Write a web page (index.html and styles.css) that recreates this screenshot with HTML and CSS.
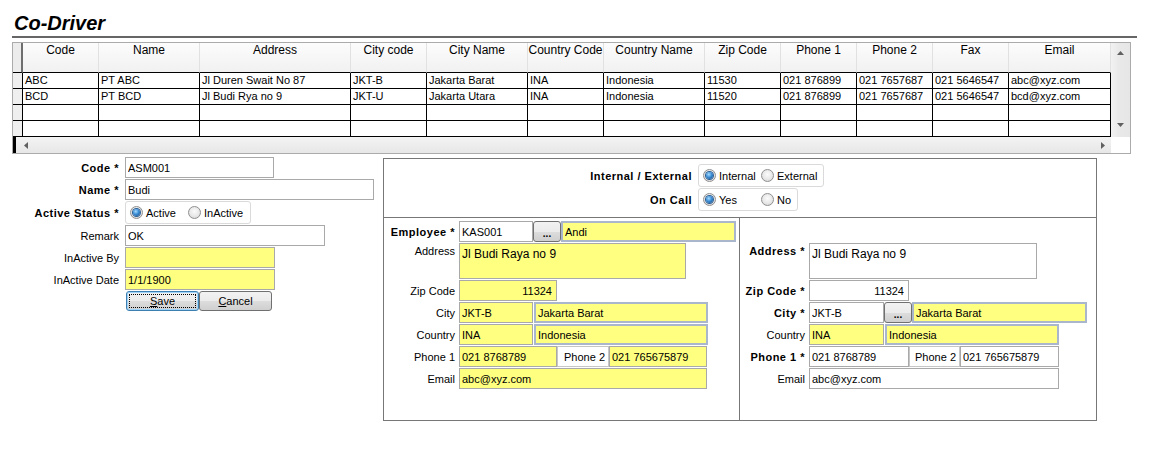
FILE: index.html
```html
<!DOCTYPE html>
<html>
<head>
<meta charset="utf-8">
<title>Co-Driver</title>
<link rel="stylesheet" href="styles.css">
</head>
<body>
<h1 class="title">Co-Driver</h1>

<div class="grid">
  <div class="rh rh-head"></div>
  <div class="hc">Code</div>
  <div class="hc">Name</div>
  <div class="hc">Address</div>
  <div class="hc">City code</div>
  <div class="hc">City Name</div>
  <div class="hc">Country Code</div>
  <div class="hc">Country Name</div>
  <div class="hc">Zip Code</div>
  <div class="hc">Phone 1</div>
  <div class="hc">Phone 2</div>
  <div class="hc">Fax</div>
  <div class="hc">Email</div>
  <div class="vscroll">
    <svg width="7" height="4" viewBox="0 0 7 4"><path d="M0 4 L3.5 0 L7 4 Z" fill="#606060"/></svg>
    <svg width="7" height="4" viewBox="0 0 7 4"><path d="M0 0 L3.5 4 L7 0 Z" fill="#606060"/></svg>
  </div>

  <div class="rh"></div>
  <div class="dc">ABC</div><div class="dc">PT ABC</div><div class="dc">Jl Duren Swait No 87</div><div class="dc">JKT-B</div><div class="dc">Jakarta Barat</div><div class="dc">INA</div><div class="dc">Indonesia</div><div class="dc">11530</div><div class="dc">021 876899</div><div class="dc">021 7657687</div><div class="dc">021 5646547</div><div class="dc">abc@xyz.com</div>

  <div class="rh"></div>
  <div class="dc">BCD</div><div class="dc">PT BCD</div><div class="dc">Jl Budi Rya no 9</div><div class="dc">JKT-U</div><div class="dc">Jakarta Utara</div><div class="dc">INA</div><div class="dc">Indonesia</div><div class="dc">11520</div><div class="dc">021 876899</div><div class="dc">021 7657687</div><div class="dc">021 5646547</div><div class="dc">bcd@xyz.com</div>

  <div class="rh"></div>
  <div class="dc"></div><div class="dc"></div><div class="dc"></div><div class="dc"></div><div class="dc"></div><div class="dc"></div><div class="dc"></div><div class="dc"></div><div class="dc"></div><div class="dc"></div><div class="dc"></div><div class="dc"></div>

  <div class="rh"></div>
  <div class="dc"></div><div class="dc"></div><div class="dc"></div><div class="dc"></div><div class="dc"></div><div class="dc"></div><div class="dc"></div><div class="dc"></div><div class="dc"></div><div class="dc"></div><div class="dc"></div><div class="dc"></div>

  <div class="hscroll">
    <div class="hs-left">
      <span class="hs-bar"></span>
      <svg width="4" height="7" viewBox="0 0 4 7"><path d="M4 0 L0 3.5 L4 7 Z" fill="#606060"/></svg>
    </div>
    <svg width="4" height="7" viewBox="0 0 4 7"><path d="M0 0 L4 3.5 L0 7 Z" fill="#606060"/></svg>
  </div>
  <div class="corner"></div>
</div>

<div class="lower">
  <div class="form">
    <label class="lbl b">Code *</label>
    <input class="tb w-code" value="ASM001">
    <label class="lbl b">Name *</label>
    <input class="tb w-name" value="Budi">
    <label class="lbl b">Active Status *</label>
    <div class="rgroup g-active">
      <span class="opt"><span class="radio on"></span>Active</span>
      <span class="opt"><span class="radio"></span>InActive</span>
    </div>
    <label class="lbl">Remark</label>
    <input class="tb w-remark" value="OK">
    <label class="lbl">InActive By</label>
    <input class="tb y w-inact" value="">
    <label class="lbl">InActive Date</label>
    <input class="tb y w-inact" value="1/1/1900">
    <span></span>
    <div class="btns">
      <button class="btn focus"><u>S</u>ave</button>
      <button class="btn"><u>C</u>ancel</button>
    </div>
  </div>

  <div class="panel">
    <div class="ptop">
      <div class="lbl b">Internal / External</div>
      <div class="rgroup">
        <span class="opt"><span class="radio on"></span>Internal</span>
        <span class="opt"><span class="radio"></span>External</span>
      </div>
      <div class="lbl b">On Call</div>
      <div class="rgroup">
        <span class="opt"><span class="radio on"></span>Yes</span>
        <span class="opt"><span class="radio"></span>No</span>
      </div>
    </div>

    <div class="pbottom">
      <div class="sec sec-l">
        <label class="lbl b">Employee *</label>
        <div class="row">
          <input class="tb w-l-code" value="KAS001">
          <button class="dots">...</button>
          <input class="tb y thick w-l-name" value="Andi">
        </div>
        <label class="lbl top">Address</label>
        <textarea class="tb y ta w-l-addr">Jl Budi Raya no 9</textarea>
        <label class="lbl">Zip Code</label>
        <input class="tb y num w-l-zip" value="11324">
        <label class="lbl">City</label>
        <div class="row">
          <input class="tb y w-l-code" value="JKT-B">
          <input class="tb y thick w-l-city" value="Jakarta Barat">
        </div>
        <label class="lbl">Country</label>
        <div class="row">
          <input class="tb y w-l-code" value="INA">
          <input class="tb y thick w-l-city" value="Indonesia">
        </div>
        <label class="lbl">Phone 1</label>
        <div class="row">
          <input class="tb y w-l-zip" value="021 8768789">
          <span class="plbl w-l-plbl">Phone 2</span>
          <input class="tb y w-l-zip" value="021 765675879">
        </div>
        <label class="lbl">Email</label>
        <input class="tb y w-l-email" value="abc@xyz.com">
      </div>

      <div class="sec sec-r">
        <label class="lbl b top">Address *</label>
        <textarea class="tb ta w-r-addr">Jl Budi Raya no 9</textarea>
        <label class="lbl b">Zip Code *</label>
        <input class="tb num w-r-zip" value="11324">
        <label class="lbl b">City *</label>
        <div class="row">
          <input class="tb w-r-code" value="JKT-B">
          <button class="dots">...</button>
          <input class="tb y thick w-r-name" value="Jakarta Barat">
        </div>
        <label class="lbl">Country</label>
        <div class="row">
          <input class="tb y w-r-code" value="INA">
          <input class="tb y thick w-r-country" value="Indonesia">
        </div>
        <label class="lbl b">Phone 1 *</label>
        <div class="row">
          <input class="tb w-r-zip" value="021 8768789">
          <span class="plbl w-r-plbl">Phone 2</span>
          <input class="tb w-r-ph2" value="021 765675879">
        </div>
        <label class="lbl">Email</label>
        <input class="tb w-r-email" value="abc@xyz.com">
      </div>
    </div>
  </div>
</div>
</body>
</html>
```

FILE: styles.css
```css
* { box-sizing: border-box; }

body {
  margin: 0;
  background: #fff;
  color: #000;
  font-family: "Liberation Sans", Arial, sans-serif;
  font-size: 11px;
}

input, textarea, button {
  font: inherit;
  color: #000;
  margin: 0;
}

.title {
  margin: 0 0 0 12px;
  width: 1125px;
  padding: 11px 0 1px 2px;
  font: italic bold 20px/24px "Liberation Sans", Arial, sans-serif;
  border-bottom: 2px solid #666;
}

/* ---------- data grid ---------- */
.grid {
  margin: 4px 0 0 12px;
  width: 1119px;
  border: 1px solid #ababab;
  display: grid;
  grid-template-columns: 10px 76px 101px 151px 76px 101px 76px 101px 76px 76px 76px 76px 102px 19px;
  grid-template-rows: 30px 16px 16px 16px 16px 16px;
}

.hc {
  background: linear-gradient(#fcfcfc, #f1f1f1);
  border-right: 1px solid #e1e1e1;
  border-bottom: 1px solid #000;
  font-size: 12px;
  line-height: 15px;
  text-align: center;
  white-space: nowrap;
}

.rh {
  background: #efefef;
  border-right: 1px solid #000;
  border-bottom: 1px solid #000;
}

.rh-head {
  background: #ececec;
  border-right: 2px solid #6e6e6e;
}

.dc {
  border-right: 1px solid #000;
  border-bottom: 1px solid #000;
  padding-left: 2px;
  line-height: 15px;
  white-space: nowrap;
  overflow: hidden;
}

.vscroll {
  grid-column: 14;
  grid-row: 1 / 6;
  background: linear-gradient(90deg, #f2f2f2, #e9e9e9 40%, #e6e6e6);
  display: flex;
  flex-direction: column;
  justify-content: space-between;
  align-items: center;
  padding: 8px 0 10px;
}

.hscroll {
  grid-column: 1 / 14;
  grid-row: 6;
  background: linear-gradient(#f3f3f3, #e7e7e7);
  display: flex;
  justify-content: space-between;
  align-items: center;
  padding-right: 6px;
}

.hs-left {
  display: flex;
  align-items: center;
  height: 100%;
  gap: 8px;
}

.hs-bar {
  width: 3px;
  height: 100%;
  background: #000;
}

.corner {
  grid-column: 14;
  grid-row: 6;
  background: #fff;
}

/* ---------- lower area ---------- */
.lower {
  display: flex;
  margin-top: 3px;
}

.form {
  width: 383px;
  display: grid;
  grid-template-columns: 125px auto;
  grid-template-rows: 21px 21px 23px 21px 21px 21px 20px;
  row-gap: 1px;
  align-content: start;
}

.lbl {
  display: flex;
  align-items: center;
  justify-content: flex-end;
  padding-right: 6px;
  white-space: nowrap;
}

.lbl.b {
  font-weight: bold;
  letter-spacing: 0.5px;
}

.lbl.top {
  align-items: flex-start;
  padding-top: 2px;
}

.tb {
  height: 21px;
  border: 1px solid #a9a9a9;
  background: #fff;
  padding: 0 2px;
  outline: none;
  justify-self: start;
}

.tb.y { background: #ffff80; }

.tb.thick {
  border: 2px solid #a9b6cc;
}

.tb.num { text-align: right; padding-right: 4px; }

.ta {
  height: 36px;
  font-size: 12px;
  padding: 3px 2px 0;
  resize: none;
  overflow: hidden;
  line-height: 15px;
}

.w-code { width: 149px; }
.w-name { width: 249px; }
.w-remark { width: 200px; }
.w-inact { width: 150px; }

.rgroup {
  display: flex;
  align-items: center;
  height: 23px;
  border: 1px solid #dadada;
  border-radius: 3px;
  background: #fff;
  padding: 0 6px 0 4px;
  justify-self: start;
}

.g-active { width: 126px; }

.opt {
  display: inline-flex;
  align-items: center;
  gap: 3px;
}

.opt:first-child { width: 58px; }

.radio {
  width: 13px;
  height: 13px;
  border-radius: 50%;
  border: 1px solid #8f8f8f;
  background: radial-gradient(circle at 50% 40%, #fbfbfb 0%, #e8e8e8 55%, #cfcfcf 100%);
  display: inline-flex;
  align-items: center;
  justify-content: center;
  flex: none;
}

.radio.on::after {
  content: "";
  width: 7px;
  height: 7px;
  border-radius: 50%;
  background: radial-gradient(circle at 40% 35%, #a9dcff 0%, #3b8fd6 45%, #0f3f7a 100%);
  box-shadow: 0 0 0 1px #2a5e96;
}

.btns {
  display: flex;
  padding-left: 1px;
}

.btn {
  width: 73px;
  height: 20px;
  border: 1px solid #707070;
  border-radius: 3px;
  background: linear-gradient(#f2f2f2, #ebebeb 50%, #dddddd 51%, #cfcfcf);
  font-size: 11px;
  padding: 0;
}

.btn.focus {
  border-color: #3c7fb1;
  box-shadow: inset 0 0 0 1px #9fd3f7;
  outline: 1px dotted #000;
  outline-offset: -4px;
}

/* ---------- right panel ---------- */
.panel {
  width: 714px;
  height: 263px;
  margin-top: 1px;
  border: 1px solid #777;
}

.ptop {
  height: 59px;
  border-bottom: 1px solid #777;
  padding-top: 5px;
  display: grid;
  grid-template-columns: 313px auto;
  grid-template-rows: 23px 23px;
  row-gap: 1px;
}

.ptop .lbl { padding-right: 5px; }
.ptop .rgroup { margin-left: 1px; }

.pbottom {
  display: flex;
  height: 202px;
}

.sec {
  display: grid;
  row-gap: 1px;
  align-content: start;
}

.sec-l {
  width: 356px;
  border-right: 1px solid #777;
  padding-top: 3px;
  grid-template-columns: 75px auto;
  grid-template-rows: 21px 36px 21px 21px 21px 21px 21px;
}

.sec-r {
  flex: 1;
  padding-top: 25px;
  grid-template-columns: 69px auto;
  grid-template-rows: 36px 21px 21px 21px 21px 21px;
}

.sec .lbl { padding-right: 4px; }

.row {
  display: flex;
  align-items: stretch;
}

.dots {
  width: 28px;
  height: 21px;
  border: 1px solid #707070;
  border-radius: 3px;
  background: linear-gradient(#f2f2f2, #ebebeb 50%, #dddddd 51%, #cfcfcf);
  font-weight: bold;
  font-size: 10px;
  line-height: 10px;
  padding: 4px 0 0;
  margin: 0;
}

.plbl {
  height: 21px;
  border: 1px solid #c6c6c6;
  background: #fff;
  display: flex;
  align-items: center;
  justify-content: flex-end;
  padding-right: 3px;
}

.w-l-code { width: 74px; }
.w-l-name { width: 175px; }
.w-l-addr { width: 227px; }
.w-l-zip { width: 98px; }
.w-l-city { width: 174px; margin-left: 1px; }
.w-l-plbl { width: 52px; }
.w-l-email { width: 248px; }

.w-r-addr { width: 228px; }
.w-r-zip { width: 100px; }
.w-r-code { width: 75px; }
.w-r-name { width: 175px; }
.w-r-country { width: 174px; margin-left: 1px; }
.w-r-plbl { width: 51px; }
.w-r-ph2 { width: 99px; }
.w-r-email { width: 250px; }
```
